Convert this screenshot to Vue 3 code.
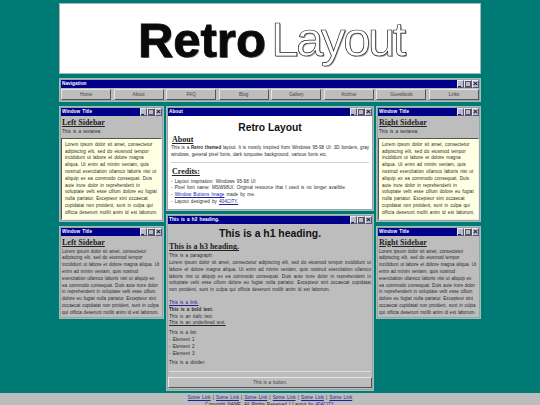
<script setup>
const lorem = 'Lorem ipsum dolor sit amet, consectetur adipiscing elit, sed do eiusmod tempor incididunt ut labore et dolore magna aliqua. Ut enim ad minim veniam, quis nostrud exercitation ullamco laboris nisi ut aliquip ex ea commodo consequat. Duis aute irure dolor in reprehenderit in voluptate velit esse cillum dolore eu fugiat nulla pariatur. Excepteur sint occaecat cupidatat non proident, sunt in culpa qui officia deserunt mollit anim id est laborum.'
const navItems = ['Home', 'About', 'FAQ', 'Blog', 'Gallery', 'Archive', 'Guestbook', 'Links']
const footerLinks = Array(6).fill('Some Link')
</script>

<template>
  <div class="page">
    <div class="wrap">
      <header class="banner">
        <span class="logo-a">Retro</span><span class="logo-b">Layout</span>
      </header>

      <section class="win">
        <div class="bar"><span>Navigation</span><div class="btns"><i class="b min"></i><i class="b max"></i><i class="b cls"></i></div></div>
        <nav class="nav"><button v-for="n in navItems" :key="n" class="btn">{{ n }}</button></nav>
      </section>

      <div class="cols">
        <aside class="col side">
          <section class="win">
            <div class="bar"><span>Window Title</span><div class="btns"><i class="b min"></i><i class="b max"></i><i class="b cls"></i></div></div>
            <div class="body">
              <h3>Left Sidebar</h3>
              <p class="lab">This is a textarea:</p>
              <div class="ta">{{ lorem }}</div>
            </div>
          </section>
          <section class="win">
            <div class="bar"><span>Window Title</span><div class="btns"><i class="b min"></i><i class="b max"></i><i class="b cls"></i></div></div>
            <div class="body">
              <h3>Left Sidebar</h3>
              <p class="txt">{{ lorem }}</p>
            </div>
          </section>
        </aside>

        <main class="col mid">
          <section class="win">
            <div class="bar"><span>About</span><div class="btns"><i class="b min"></i><i class="b max"></i><i class="b cls"></i></div></div>
            <div class="body white">
              <h1 class="h1a">Retro Layout</h1>
              <h3 class="in">About</h3>
              <p class="just intro">This is a <b>Retro themed</b> layout. It is mostly inspired from Windows 95-98 UI: 3D borders, gray windows, general pixel fonts, dark turquoise background, various fonts etc.</p>
              <hr />
              <h3 class="in cred">Credits:</h3>
              <p class="plain">- Layout inspiration: Windows 95-98 UI</p>
              <p class="plain">- Pixel font name: MSW98UI. Original resource that I used is no longer availble.</p>
              <p class="plain">- <a>Window Buttons Image</a> made by me.</p>
              <p class="plain">- Layout designed by <a>404CITY.</a></p>
            </div>
          </section>
          <section class="win">
            <div class="bar"><span>This is a h2 heading.</span><div class="btns"><i class="b min"></i><i class="b max"></i><i class="b cls"></i></div></div>
            <div class="body tight">
              <h1 class="h1b">This is a h1 heading.</h1>
              <h3 class="h3b">This is a h3 heading.</h3>
              <p class="plain">This is a paragraph:</p>
              <p class="just para">{{ lorem }}</p>
              <p class="plain"><a>This is a link.</a></p>
              <p class="plain"><b>This is a bold text.</b></p>
              <p class="plain"><em>This is an italic text.</em></p>
              <p class="plain gap"><u>This is an underlined text.</u></p>
              <p class="plain">This is a list:</p>
              <p class="plain">- Element 1</p>
              <p class="plain">- Element 2</p>
              <p class="plain gap">- Element 3</p>
              <p class="plain">This is a divider:</p>
              <hr class="hr2" />
              <button class="btn wide">This is a button.</button>
            </div>
          </section>
        </main>

        <aside class="col side">
          <section class="win">
            <div class="bar"><span>Window Title</span><div class="btns"><i class="b min"></i><i class="b max"></i><i class="b cls"></i></div></div>
            <div class="body">
              <h3>Right Sidebar</h3>
              <p class="lab">This is a textarea:</p>
              <div class="ta">{{ lorem }}</div>
            </div>
          </section>
          <section class="win">
            <div class="bar"><span>Window Title</span><div class="btns"><i class="b min"></i><i class="b max"></i><i class="b cls"></i></div></div>
            <div class="body">
              <h3>Right Sidebar</h3>
              <p class="txt">{{ lorem }}</p>
            </div>
          </section>
        </aside>
      </div>
    </div>

    <footer class="foot">
      <div><template v-for="(l, i) in footerLinks" :key="i"><a>{{ l }}</a><span v-if="i < 5"> | </span></template></div>
      <div>Copyright NAME. All Rights Reserved | Layout by <a>404CITY.</a></div>
    </footer>
  </div>
</template>

<style>
html, body { margin: 0; height: 100%; overflow: hidden; background: #007a74; }
</style>

<style scoped>
.page {
  width: 540px; height: 405px; position: relative; overflow: hidden;
  background: #007a74; font-family: "Liberation Sans", Arial, sans-serif;
  font-size: 4.6px; line-height: 6.8px; word-spacing: .75px; letter-spacing: .05px; color: #2a2a2a;
}
.wrap { width: 422px; margin: 0 auto; padding-top: 3px; display: flex; flex-direction: column; gap: 4px; }
.banner {
  height: 71px; box-sizing: border-box; background: #fff; border: 1px solid #a9b8b6;
  display: flex; justify-content: center; padding-left: 2px;
  font-family: "Liberation Sans", Arial, sans-serif; font-size: 49px; line-height: 1; word-spacing: 0; letter-spacing: 0;
}
.logo-a { font-weight: 700; color: #0a0a0a; padding-top: 12px; text-shadow: 1px 1px 0 #999; -webkit-text-stroke: 0.8px #0a0a0a; }
.logo-b { color: #fff; padding-top: 11px; -webkit-text-stroke: 0.7px #222; text-shadow: 1px 1px 0 #aaa; margin-left: 5.5px; letter-spacing: -2.4px; }

.win { background: #bdbdbd; border: 1px solid #a9bcbc; box-shadow: inset 0 0 0 1px #93a6a6; padding: 1px; box-sizing: border-box; }
.bar {
  height: 8px; background: #000088; color: #fff; font: 700 4.7px/8px "Liberation Sans", Arial, sans-serif;
  display: flex; justify-content: space-between; align-items: center; padding-left: 1px;
}
.btns { display: flex; height: 8px; }
.b {
  width: 7.5px; height: 8px; box-sizing: border-box; display: block; position: relative;
  background: #b9b9d0; border: 1px solid; border-color: #e8e8f2 #55557a #55557a #e8e8f2;
}
.min::after { content: ""; position: absolute; left: 0; bottom: 0; width: 3px; height: 1px; background: #222; }
.max::after { content: ""; position: absolute; inset: 0; border: 1px solid #555; }
.cls::after { content: "\00d7"; position: absolute; inset: -1px; text-align: center; font: 700 8px/8px "Liberation Sans", sans-serif; color: #111; }

.nav { display: grid; grid-template-columns: repeat(8, 1fr); gap: 2.5px; padding-top: 1px; }
.btn {
  height: 11px; box-sizing: border-box; padding: 0; background: #bdbdbd; color: #444;
  border: 1px solid; border-color: #e6e6e6 #555 #555 #e6e6e6;
  font: 4.6px/9px "Liberation Sans", Arial, sans-serif; word-spacing: .5px;
}

.cols { display: grid; grid-template-columns: 105px 208px 105px; gap: 2px; }
.col { display: flex; flex-direction: column; }
.side { gap: 4px; }
.mid { gap: 3px; }
.body { padding: 1px 0 0; }
.white { background: #fff; padding-bottom: 3.5px; }
.tight { padding-bottom: 1px; }
h3 {
  margin: 0; font: 700 8px/10px "Liberation Serif", "Times New Roman", serif;
  text-decoration: underline; color: #222; word-spacing: 0; letter-spacing: 0; padding: 1px 0 0 1px;
}
p { margin: 0; }
.lab { padding: 1px 1px 2px; }
.ta {
  background: #ffffe1; border: 1px solid; border-color: #555 #eee #eee #555;
  padding: 3px 3px 2px 3px;
}
.txt { padding: 1px 1px 0; word-spacing: .5px; letter-spacing: 0; }
.intro { word-spacing: .5px; letter-spacing: 0; }
a { color: #22229c; text-decoration: underline; }
.h1a, .h1b { margin: 0; text-align: center; font: 700 10.3px/15px "Liberation Sans", Arial, sans-serif; color: #111; word-spacing: 0; letter-spacing: 0; }
.h1a { padding-top: 3px; }
.h1b { font-size: 10.4px; line-height: 14px; padding-top: 2px; }
.in { padding-left: 4px; padding-top: 0; }
.just { text-align: justify; padding: 0 3px; }
.plain { padding: 0 3px; }
hr { border: 0; height: 1px; background: #cfcfcf; margin: 3px 3px 4px; }
.cred { margin-bottom: 2px; }
.h3b { padding: 1px 0 0 1px; margin-bottom: 1px; }
.tight .plain, .tight .just { padding: 0 1px; }
.para { margin-bottom: 6px; }
.gap { margin-bottom: 3px; }
.hr2 { background: #ddd; margin: 4px 1px 5px; }
.wide { width: 100%; display: block; height: 11px; }
.foot {
  position: absolute; left: 0; right: 0; bottom: 0; height: 12px; background: #bdbdbd; text-align: center;
  padding-top: 2px; box-sizing: border-box; color: #222;
}
</style>
